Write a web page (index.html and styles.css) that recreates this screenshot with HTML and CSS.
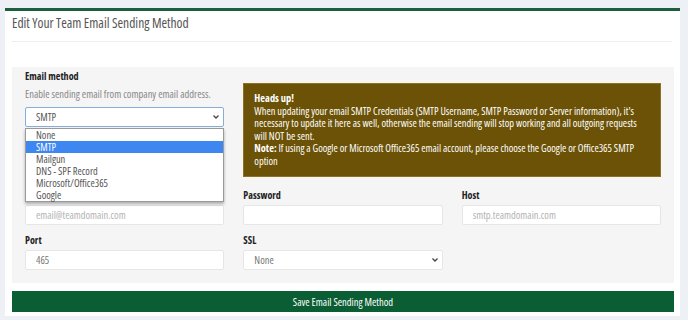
FILE: index.html
```html
<!DOCTYPE html>
<html lang="en">

<head>
    <meta charset="UTF-8">
    <meta name="viewport" content="width=device-width, initial-scale=1.0">
    <title>Edit Your Team Email Sending Method</title>
    <link rel="stylesheet" href="styles.css">
</head>

<body>
    <div class="card">
        <div class="card-header">Edit Your Team Email Sending Method</div>

        <div class="card-body">
            <div class="panel">
                <!-- email method -->
                <div class="field method">
                    <label class="label">Email method</label>
                    <p class="help">Enable sending email from company email address.</p>
                    <div class="select-wrap">
                        <select class="control focused">
                            <option>None</option>
                            <option selected>SMTP</option>
                            <option>Mailgun</option>
                            <option>DNS - SPF Record</option>
                            <option>Microsoft/Office365</option>
                            <option>Google</option>
                        </select>
                        <svg class="chevron" width="8" height="6" viewBox="0 0 8 6">
                            <path d="M1.5 1.5 L4 4 L6.5 1.5" fill="none" stroke="#444" stroke-width="1.3"/>
                        </svg>
                        <ul class="options">
                            <li>None</li>
                            <li class="active">SMTP</li>
                            <li>Mailgun</li>
                            <li>DNS - SPF Record</li>
                            <li>Microsoft/Office365</li>
                            <li>Google</li>
                        </ul>
                    </div>
                </div>

                <div class="alert">
                    <strong>Heads up!</strong><br>
                    When updating your email SMTP Credentials (SMTP Username, SMTP Password or Server information), it's necessary to update it here as well, otherwise the email sending will stop working and all outgoing requests will NOT be sent.<br>
                    <strong>Note:</strong> If using a Google or Microsoft Office365 email account, please choose the Google or Office365 SMTP option
                </div>

                <!-- credentials -->
                <div class="field">
                    <label class="label">Email</label>
                    <input class="control" type="text" placeholder="email@teamdomain.com">
                </div>
                <div class="field">
                    <label class="label">Password</label>
                    <input class="control" type="password">
                </div>
                <div class="field">
                    <label class="label">Host</label>
                    <input class="control" type="text" placeholder="smtp.teamdomain.com">
                </div>

                <div class="field">
                    <label class="label">Port</label>
                    <input class="control" type="text" value="465">
                </div>
                <div class="field">
                    <label class="label">SSL</label>
                    <div class="select-wrap">
                        <select class="control">
                            <option selected>None</option>
                            <option>SSL</option>
                            <option>TLS</option>
                        </select>
                        <svg class="chevron" width="8" height="6" viewBox="0 0 8 6">
                            <path d="M1.5 1.5 L4 4 L6.5 1.5" fill="none" stroke="#444" stroke-width="1.3"/>
                        </svg>
                    </div>
                </div>
            </div>

            <button class="save">Save Email Sending Method</button>
        </div>
    </div>
</body>

</html>
```

FILE: styles.css
```css
body {
    margin: 0;
    padding: 8px 8px 0 5px;
    background-color: #edf0f4;
    font-family: 'Open Sans', 'Liberation Sans', sans-serif;
    font-stretch: condensed;
}

.card {
    background: white;
    border-top: 3px solid #1d5e3c;
    padding: 0 6px 4px 7px;
}

.card-header {
    padding: 4px 0 10px;
    border-bottom: 1px solid #eeeeee;
    margin-right: 2px;
    font-size: 13.5px;
    line-height: 16px;
    color: #555;
}

.card-body {
    padding-top: 25px;
}

.panel {
    background: #f5f5f5;
    padding: 3px 13px 13px;
    display: grid;
    grid-template-columns: repeat(3, 1fr);
    gap: 9px 19px;
}

.field {
    display: flex;
    flex-direction: column;
}

.label {
    font-size: 10.1px;
    line-height: 12px;
    font-weight: bold;
    color: #222;
    margin-bottom: 4px;
}

.help {
    margin: 2px 0 7px;
    font-size: 10.5px;
    line-height: 12px;
    color: #888;
}

.select-wrap {
    position: relative;
}

.control {
    display: block;
    box-sizing: border-box;
    width: 100%;
    height: 20px;
    margin: 0;
    padding: 0 10px;
    border: 1px solid #e6e6e6;
    border-radius: 2px;
    background: white;
    font-family: inherit;
    font-stretch: inherit;
    font-size: 10.4px;
    color: #777;
    outline: none;
    -webkit-appearance: none;
    appearance: none;
}

.control::placeholder {
    color: #b3b3b3;
}

.control.focused {
    border-color: #86aedb;
    color: #555;
}

.chevron {
    position: absolute;
    right: 4px;
    top: 7px;
    pointer-events: none;
}

.options {
    position: absolute;
    top: 21px;
    left: 0;
    right: 0;
    margin: 0;
    padding: 0;
    list-style: none;
    background: white;
    border: 1px solid #9a9a9a;
    box-shadow: 0 2px 3px rgba(0, 0, 0, 0.3);
    z-index: 2;
}

.options li {
    height: 12px;
    line-height: 12px;
    padding-left: 10px;
    font-size: 10.4px;
    color: #555;
}

.options li.active {
    background: #3e86f0;
    color: white;
}

.alert {
    grid-column: 2 / 4;
    margin: 13px 0 3px;
    padding: 8px 19px 9px 10px;
    background: #6b5206;
    border: 1px solid #8c7223;
    font-size: 10.4px;
    line-height: 12.5px;
    color: white;
}

.save {
    display: block;
    width: 100%;
    height: 21px;
    margin-top: 8px;
    border: none;
    background: #0b5e33;
    color: white;
    font-family: inherit;
    font-stretch: inherit;
    font-size: 10.5px;
    cursor: pointer;
}
```
